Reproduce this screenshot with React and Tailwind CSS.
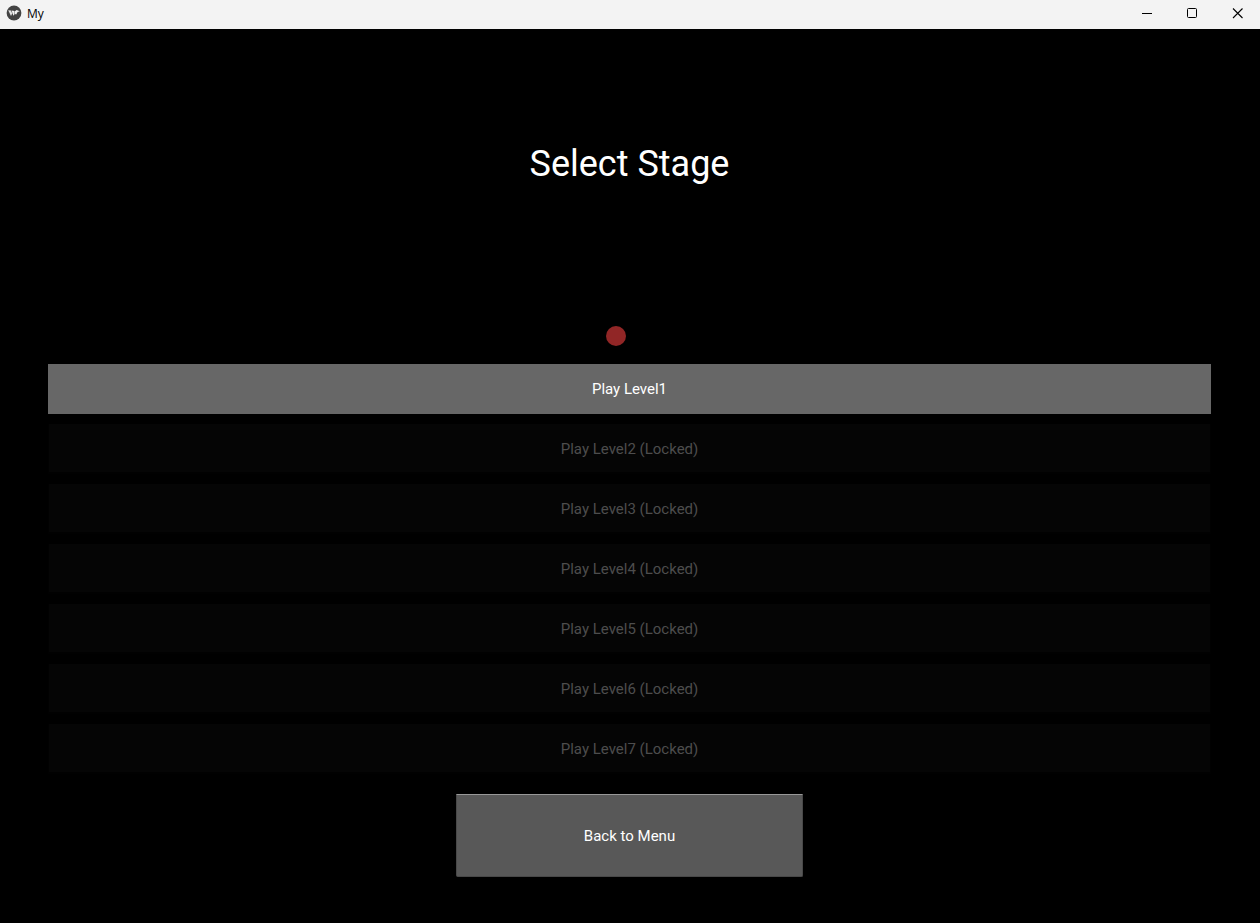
const lockedLevels = [2, 3, 4, 5, 6, 7];

function AppLogo() {
  return (
    <svg viewBox="0 0 16 16" className="size-4" aria-hidden="true">
      <circle cx="8" cy="8" r="7.4" fill="#434343" />
      <path d="M2.2 5.2 L5 5.6 L6.2 8.6 L5 11 Z" fill="#e4e4e4" />
      <path d="M5.6 5.6 L8.4 6 L8.6 9 L7.4 10.8 Z" fill="#f3f3f3" />
      <path d="M8.6 6.4 L10.6 5 L13.8 6.2 L11.6 7 L10.2 9.6 L9 9 Z" fill="#f3f3f3" />
    </svg>
  );
}

function TitleBar() {
  return (
    <header className="flex h-[29px] items-start justify-between bg-[#f3f3f3] text-black">
      <div className="flex h-[26px] items-center gap-[5px] pl-1.5">
        <AppLogo />
        <span className="pt-0.5 font-['Open_Sans','Noto_Sans',sans-serif] text-xs">My</span>
      </div>
      <div className="flex h-[27px]">
        <button aria-label="Minimize" className="flex w-[45px] items-center justify-center">
          <svg viewBox="0 0 11 11" className="size-[11px]" fill="none" stroke="#000">
            <path d="M0 5.5h10" />
          </svg>
        </button>
        <button aria-label="Maximize" className="flex w-[45px] items-center justify-center">
          <svg viewBox="0 0 11 11" className="size-[11px]" fill="none" stroke="#000">
            <rect x="0.5" y="0.5" width="9" height="9" rx="1" />
          </svg>
        </button>
        <button aria-label="Close" className="flex w-[45px] items-center justify-center">
          <svg viewBox="0 0 11 11" className="size-[11px]" fill="none" stroke="#000" strokeWidth="1.1">
            <path d="M1 0.5l9.5 9.5M10.5 0.5l-9.5 9.5" />
          </svg>
        </button>
      </div>
    </header>
  );
}

export default function App() {
  return (
    <div className="flex min-h-screen flex-col bg-black font-[Roboto,sans-serif] text-white">
      <TitleBar />
      <main className="relative flex flex-1 flex-col pt-[115px] pr-[49px] pb-[46px] pl-12">
        <h1 className="text-center text-4xl leading-10">Select Stage</h1>
        <div className="absolute top-[297px] left-1/2 -ml-6 size-5 rounded-full bg-[#912626]" />
        <div className="mt-[180px] flex flex-col gap-2.5 text-[15px] leading-5">
          <button className="h-[50px] bg-[#676767]">Play Level1</button>
          {lockedLevels.map((level) => (
            <button
              key={level}
              disabled
              className="h-[50px] border-x border-b-2 border-[#010101] bg-[#050505] pt-0.5 text-[#4d4d4d]"
            >
              Play Level{level} (Locked)
            </button>
          ))}
        </div>
        <button className="mt-5 h-[83px] w-[347px] self-center rounded-b-xs border border-[#484848] border-t-[#989898] bg-[#585858] text-[15px] leading-5">
          Back to Menu
        </button>
      </main>
    </div>
  );
}
